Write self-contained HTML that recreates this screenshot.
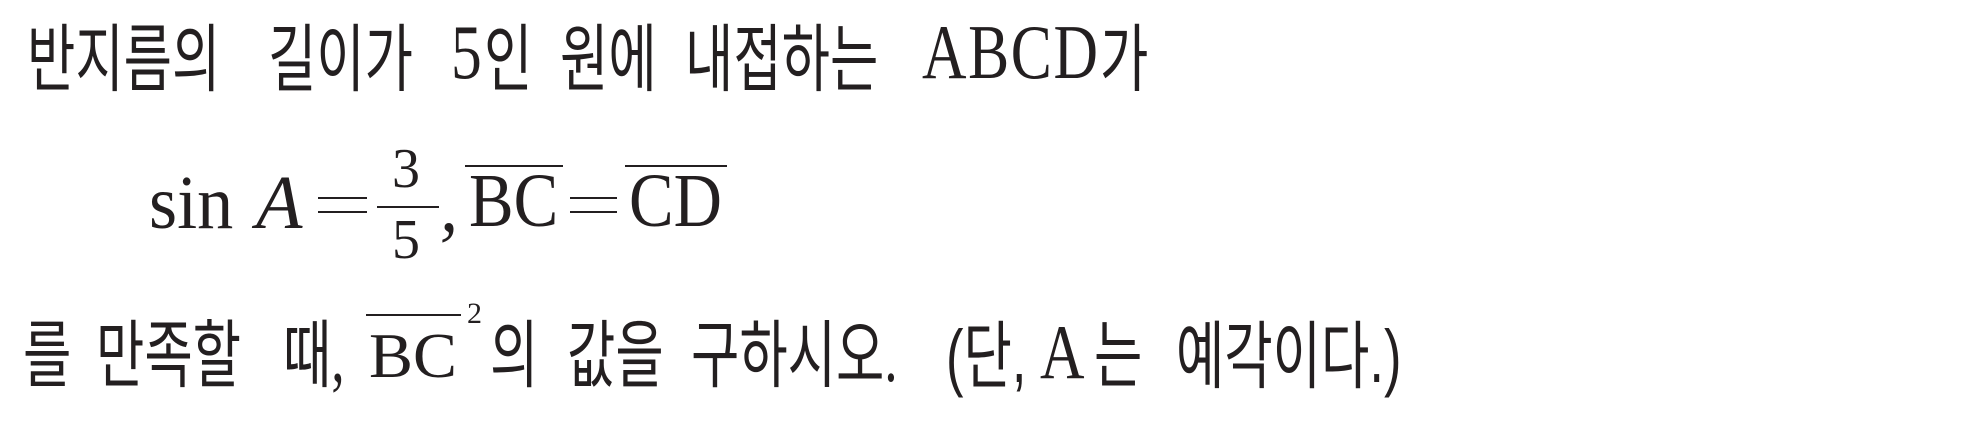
<!DOCTYPE html>
<html><head><meta charset="utf-8"><style>
html,body{margin:0;padding:0;background:#fff;}
body{width:1987px;height:434px;position:relative;overflow:hidden;color:#231f20;}
.k{position:absolute;font-family:"Liberation Serif","Noto Sans CJK KR",sans-serif;font-size:74px;line-height:74px;white-space:nowrap;transform:scaleX(0.71);transform-origin:0 0;}
.l{position:absolute;font-family:"Liberation Serif",serif;font-size:77px;line-height:77px;white-space:nowrap;transform:scaleX(0.8);transform-origin:0 0;}
.m{position:absolute;font-family:"Liberation Serif",serif;font-size:76px;line-height:76px;white-space:nowrap;transform:scaleX(0.95);transform-origin:0 0;}
.f{position:absolute;font-family:"Liberation Serif",serif;font-size:56px;line-height:56px;white-space:nowrap;}
.bar{position:absolute;height:2px;background:#231f20;}
</style></head><body>
<!-- line 1 -->
<div class="k" style="left:27px;top:24px">반지름의</div>
<div class="k" style="left:268px;top:24px">길이가</div>
<div class="l" style="left:451px;top:14px">5</div>
<div class="k" style="left:484px;top:24px">인</div>
<div class="k" style="left:560px;top:24px">원에</div>
<div class="k" style="left:685px;top:24px">내접하는</div>
<div class="l" style="left:922px;top:14px;letter-spacing:2px">ABCD</div>
<div class="k" style="left:1100px;top:24px">가</div>

<!-- math line -->
<div class="m" style="left:149px;top:165px">sin</div>
<div class="m" style="left:256px;top:165px;font-style:italic;transform:none">A</div>
<div class="bar" style="left:318px;top:197px;width:49px"></div>
<div class="bar" style="left:318px;top:211px;width:49px"></div>
<div class="f" style="left:392px;top:141px">3</div>
<div class="bar" style="left:377px;top:206px;width:62px"></div>
<div class="f" style="left:392px;top:212px">5</div>
<div class="m" style="left:440px;top:168px;font-style:italic">,</div>
<div class="bar" style="left:465px;top:165px;width:98px"></div>
<div class="m" style="left:469px;top:163px;transform:scaleX(0.88)">BC</div>
<div class="bar" style="left:570px;top:197px;width:47px"></div>
<div class="bar" style="left:570px;top:211px;width:47px"></div>
<div class="bar" style="left:625px;top:165px;width:102px"></div>
<div class="m" style="left:629px;top:163px;transform:scaleX(0.88)">CD</div>

<!-- line 3 -->
<div class="k" style="left:23px;top:320px">를</div>
<div class="k" style="left:96px;top:320px">만족할</div>
<div class="k" style="left:283px;top:320px">때,</div>
<div class="bar" style="left:366px;top:314px;width:95px"></div>
<div class="l" style="left:369px;top:324px;font-size:64px;line-height:64px;transform:scaleX(1.03)">BC</div>
<div style="position:absolute;left:467px;top:299px;font-family:'Liberation Serif',serif;font-size:30px;line-height:30px">2</div>
<div class="k" style="left:490px;top:320px">의</div>
<div class="k" style="left:567px;top:320px">값을</div>
<div class="k" style="left:691px;top:320px">구하시오.</div>
<div class="k" style="left:946px;top:320px;font-family:'Liberation Sans','Noto Sans CJK KR',sans-serif">(단,</div>
<div class="l" style="left:1040px;top:314px">A</div>
<div class="k" style="left:1094px;top:320px">는</div>
<div class="k" style="left:1176px;top:320px;font-family:'Liberation Sans','Noto Sans CJK KR',sans-serif">예각이다.)</div>
</body></html>
